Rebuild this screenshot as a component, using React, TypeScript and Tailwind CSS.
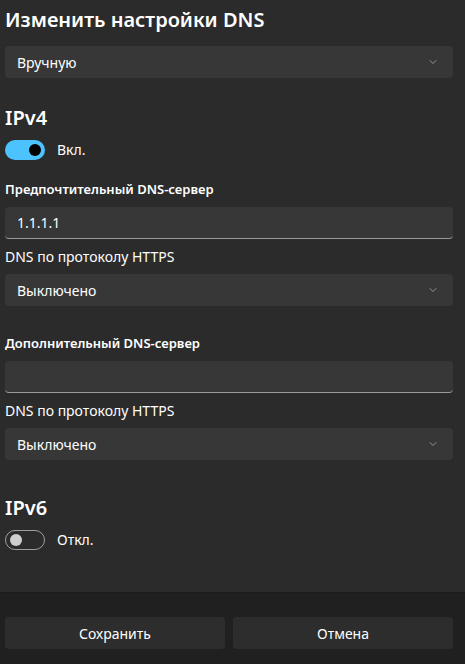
import { ChevronDown } from "lucide-react";

const font = { fontFamily: '"Noto Sans", "Open Sans", sans-serif' };

function Select({ value }: { value: string }) {
  return (
    <div className="flex h-8 items-center justify-between rounded-[4px] bg-[#373737] pl-3 pr-[14px] text-[14px] text-[#ffffff]">
      <span>{value}</span>
      <ChevronDown size={12} strokeWidth={1.25} className="text-[#c8c8c8]" />
    </div>
  );
}

function Input({ value }: { value: string }) {
  return (
    <div className="flex h-8 items-center rounded-[4px] border-b border-b-[#9a9a9a] bg-[#373737] px-3 text-[14px] text-[#ffffff]">
      {value}
    </div>
  );
}

function Toggle({ on, label }: { on: boolean; label: string }) {
  return (
    <div className="flex items-center gap-3">
      {on ? (
        <div className="flex h-5 w-10 items-center justify-end rounded-full bg-[#4cc2ff] pr-[4px]">
          <div className="h-3 w-3 rounded-full bg-black" />
        </div>
      ) : (
        <div className="flex h-5 w-10 items-center rounded-full border border-[#9e9e9e] pl-[4px]">
          <div className="h-3 w-3 rounded-full bg-[#cecece]" />
        </div>
      )}
      <span className="text-[14px] text-white">{label}</span>
    </div>
  );
}

export default function App() {
  return (
    <div className="flex h-[664px] w-[465px] flex-col bg-[#2b2b2b] text-white" style={font}>
      <div className="flex-1 pl-[5px] pr-3">
        <h1 className="pt-[6px] text-[20px] font-semibold leading-7">Изменить настройки DNS</h1>
        <div className="mt-[12px]">
          <Select value="Вручную" />
        </div>

        <h2 className="mt-[26px] text-[20px] font-semibold leading-7">IPv4</h2>
        <div className="mt-[7px]">
          <Toggle on label="Вкл." />
        </div>

        <p className="mt-[19px] text-[13px] font-semibold leading-5">Предпочтительный DNS-сервер</p>
        <div className="mt-[8px]">
          <Input value="1.1.1.1" />
        </div>
        <p className="mt-[8px] text-[14px] leading-5">DNS по протоколу HTTPS</p>
        <div className="mt-[7px]">
          <Select value="Выключено" />
        </div>

        <p className="mt-[27px] text-[13px] font-semibold leading-5">Дополнительный DNS-сервер</p>
        <div className="mt-[8px]">
          <Input value="" />
        </div>
        <p className="mt-[8px] text-[14px] leading-5">DNS по протоколу HTTPS</p>
        <div className="mt-[7px]">
          <Select value="Выключено" />
        </div>

        <h2 className="mt-[34px] text-[20px] font-semibold leading-7">IPv6</h2>
        <div className="mt-[7px]">
          <Toggle on={false} label="Откл." />
        </div>
      </div>

      <div className="flex h-[72px] gap-2 border-t border-t-[#1c1c1c] bg-[#202020] pl-[5px] pr-3 pt-[24px]">
        <button className="h-8 flex-1 rounded-[4px] bg-[#2d2d2d] text-[14px] text-white">Сохранить</button>
        <button className="h-8 flex-1 rounded-[4px] bg-[#2d2d2d] text-[14px] text-white">Отмена</button>
      </div>
    </div>
  );
}
